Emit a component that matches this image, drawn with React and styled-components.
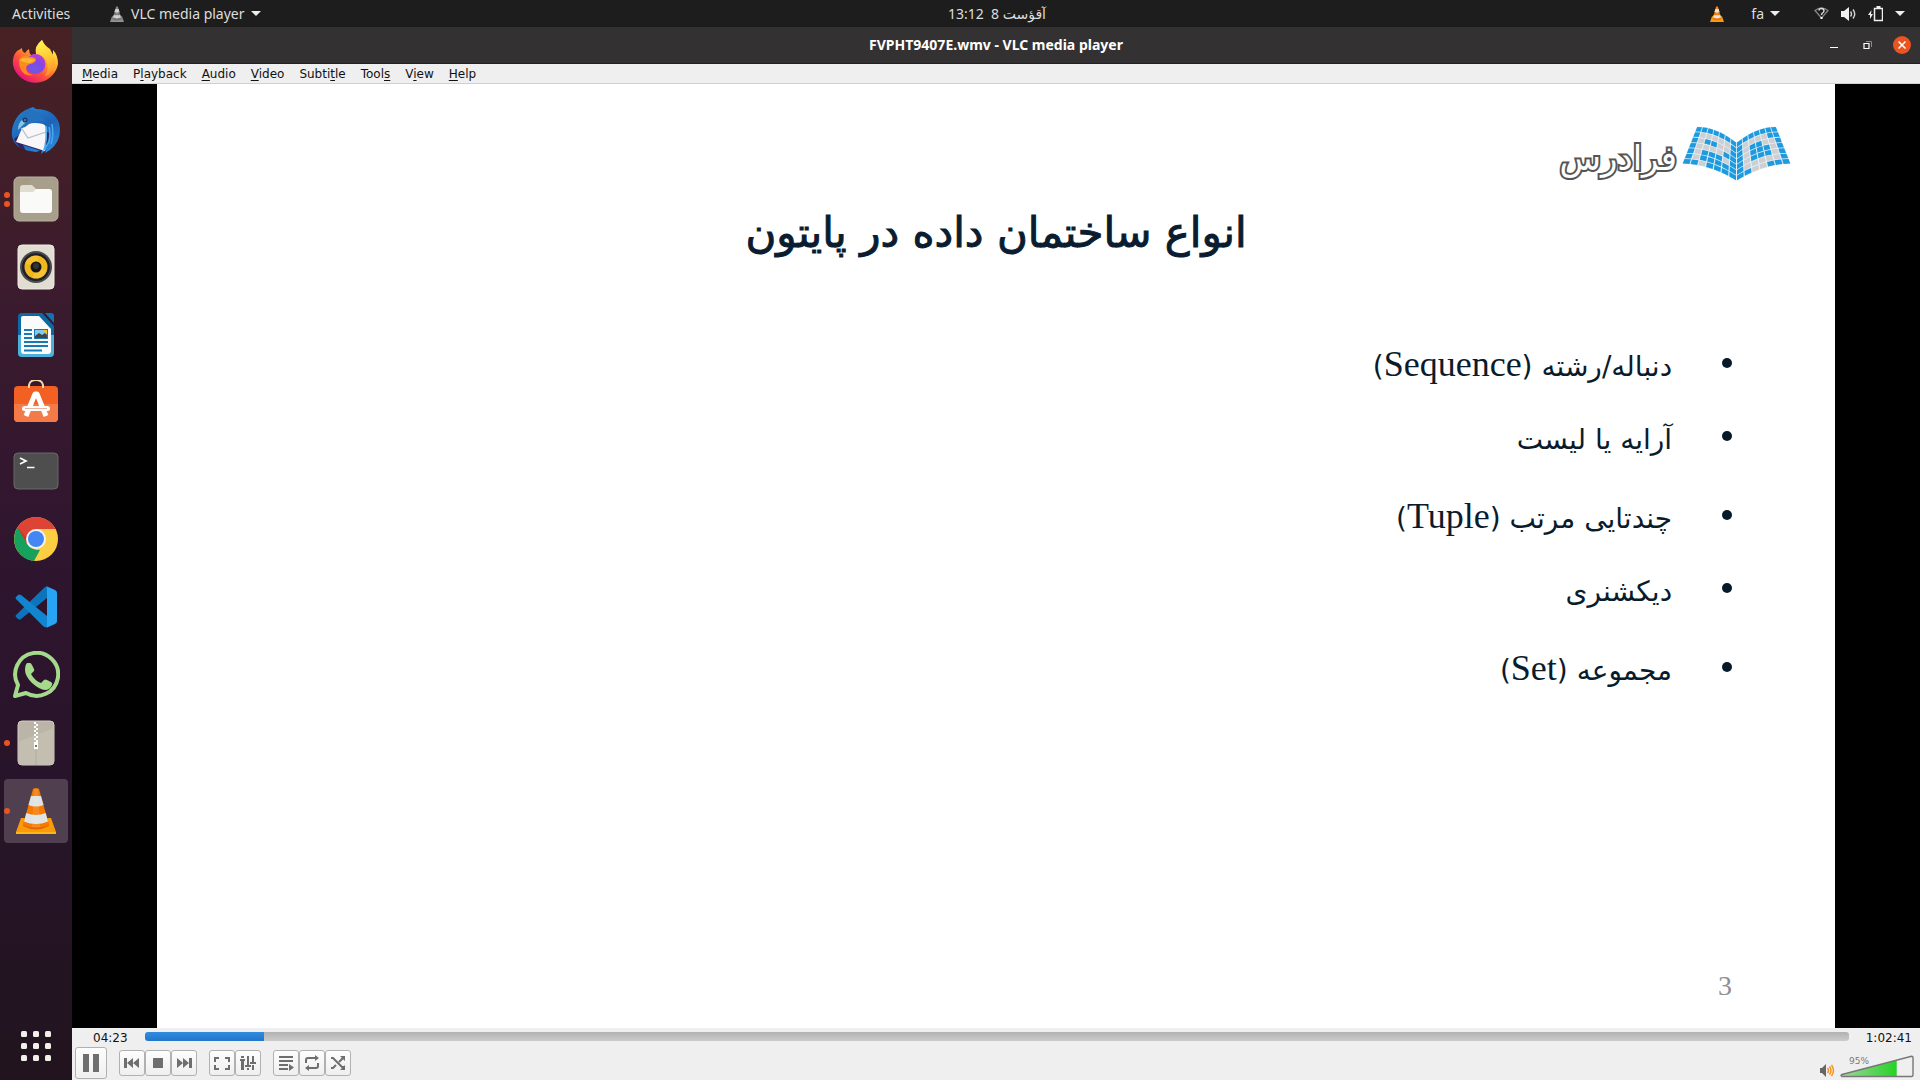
import React, { useState } from "react";
import styled, { createGlobalStyle, css } from "styled-components";

const GlobalStyle = createGlobalStyle`
  *, *::before, *::after { box-sizing: border-box; }
  html, body, #root { margin: 0; height: 100%; }
  body { background: #000; overflow: hidden; }
  button { border: 0; padding: 0; margin: 0; background: none; color: inherit; font: inherit; cursor: default; }
  svg { display: block; }
`;

const shellFont = `"Noto Sans", "DejaVu Sans", sans-serif`;
const qtFont = `"DejaVu Sans", sans-serif`;

/* ---------- desktop shell ---------- */

const Desktop = styled.div`
  display: flex;
  flex-direction: column;
  height: 100vh;
`;

const TopBar = styled.header`
  display: flex;
  height: 27px;
  background: #1d1d1d;
  color: #dedede;
  font: 14px/26px ${shellFont};
`;

const Activities = styled.button`
  flex: none;
  padding-left: 12px;
  width: 74px;
  text-align: left;
  white-space: nowrap;
`;

const TopBarMain = styled.div`
  flex: 1;
  display: grid;
  grid-template-columns: 1fr auto 1fr;
  align-items: center;
`;

const AppMenu = styled.button`
  display: flex;
  align-items: center;
  gap: 6px;
  padding-left: 35px;
  justify-self: start;
`;

const Clock = styled.button`
  white-space: pre;
`;

const Tray = styled.div`
  display: flex;
  align-items: center;
  justify-self: end;
  gap: 26px;
  padding-right: 15px;
`;

const TrayButton = styled.button`
  display: flex;
  align-items: center;
  gap: ${(p) => p.$gap || 6}px;
  margin-right: ${(p) => p.$after || 0}px;
`;

const Caret = styled.span`
  border: 5px solid transparent;
  border-top-color: #eee;
  border-bottom: 0;
`;

const Workspace = styled.div`
  flex: 1;
  min-height: 0;
  display: flex;
`;

const Dock = styled.nav`
  width: 72px;
  flex: none;
  display: flex;
  flex-direction: column;
  align-items: center;
  gap: 4px;
  padding: 4px 0 2px;
  background: linear-gradient(#482123, #3a1b2e 27%, #2f152f 50%, #28142a 72%, #21141e);
`;

const DockItem = styled.button`
  position: relative;
  width: 64px;
  height: 64px;
  flex: none;
  display: grid;
  place-items: center;
  border-radius: 4px;
  ${(p) => p.$active && css`background: #50404f;`}
  ${(p) => p.$last && css`margin-top: auto;`}
`;

const Dots = styled.span`
  position: absolute;
  left: 0;
  top: 0;
  height: 100%;
  display: flex;
  flex-direction: column;
  justify-content: center;
  gap: 3px;
`;

const Dot = styled.i`
  width: 6px;
  height: 6px;
  border-radius: 50%;
  background: #e95420;
`;

/* ---------- player window ---------- */

const Window = styled.main`
  flex: 1;
  min-width: 0;
  display: flex;
  flex-direction: column;
  background: #efefef;
`;

const TitleBar = styled.div`
  flex: none;
  display: grid;
  grid-template-columns: 1fr auto 1fr;
  align-items: center;
  height: 37px;
  background: #333132;
  border-bottom: 1px solid #232122;
`;

const WindowTitle = styled.h1`
  grid-column: 2;
  margin: 0;
  color: #fff;
  font: bold 14px/36px ${shellFont};
`;

const WindowButtons = styled.div`
  justify-self: end;
  display: flex;
  align-items: center;
  gap: 16px;
  padding-right: 9px;
`;

const WindowButton = styled.button`
  width: 18px;
  height: 18px;
  border-radius: 50%;
  background: ${(p) => (p.$close ? "#e95420" : "transparent")};
`;

const MenuBar = styled.nav`
  flex: none;
  display: flex;
  height: 20px;
  padding-left: 2px;
  border-bottom: 1px solid #d0d0d0;
  color: #111;
  font: 12px/18px ${qtFont};
`;

const MenuButton = styled.button`
  padding: 0 7px 0 8px;
  u { text-underline-offset: 2px; }
`;

const Video = styled.section`
  flex: 1;
  min-height: 0;
  display: flex;
  justify-content: center;
  background: #000;
`;

const Slide = styled.article`
  height: 100%;
  aspect-ratio: 16 / 9;
  display: flex;
  flex-direction: column;
  padding: 42px 44px 26px;
  background: #fff;
  color: #0a1c2c;
`;

const Brand = styled.div`
  display: flex;
  gap: 5px;
  align-items: flex-start;
  height: 55px;
`;

const BrandName = styled.span`
  color: #fff;
  font: 34px/64px ${qtFont};
  -webkit-text-stroke: 4px #555;
  paint-order: stroke fill;
`;

const SlideTitle = styled.h2`
  margin: 22px 0 0;
  text-align: center;
  color: #0a1c30;
  font: 42px/60px ${qtFont};
  -webkit-text-stroke: 1px #0a1c30;
`;

const Points = styled.ul`
  list-style: none;
  margin: 45px 0 0;
  padding: 0 59px;
  font: 28px/40px ${qtFont};
`;

const Point = styled.li`
  display: flex;
  align-items: flex-end;
  gap: 50px;
  height: ${(p) => (p.$mixed ? 79 : 73)}px;
  &::before {
    content: "";
    width: 10px;
    height: 10px;
    margin-bottom: 19px;
    border-radius: 50%;
    background: #071a2a;
  }
`;

const Latin = styled.bdi`
  font: 36px/40px "Liberation Serif", serif;
`;

const PageNumber = styled.p`
  margin: auto 59px 0;
  color: #8f8f8f;
  font: 28px/32px "Liberation Serif", serif;
`;

/* ---------- playback controls ---------- */

const Controls = styled.footer`
  flex: none;
  height: 52px;
  color: #111;
  font: 12px/20px ${qtFont};
`;

const SeekRow = styled.div`
  display: flex;
  align-items: flex-start;
  gap: 17px;
  height: 18px;
  padding: 0 8px 0 21px;
`;

const Seek = styled.input`
  appearance: none;
  flex: 1;
  min-width: 0;
  height: 9px;
  margin: 4px 0 0;
  border-radius: 3px;
  background:
    linear-gradient(#2f8ce0, #2277c8) 0 0 / var(--played) 100% no-repeat,
    linear-gradient(#b2b2b2, #cbcbcb);
  &::-webkit-slider-thumb { appearance: none; width: 1px; height: 9px; }
`;

const ButtonRow = styled.div`
  display: flex;
  align-items: center;
  gap: 12px;
  height: 34px;
  padding: 0 6px 0 3px;
`;

const ButtonGroup = styled.div`
  display: flex;
`;

const ControlButton = styled.button`
  width: ${(p) => (p.$large ? 32 : 26)}px;
  height: ${(p) => (p.$large ? 32 : 26)}px;
  display: grid;
  place-items: center;
  border: 1px solid #b1b1b1;
  border-radius: 3px;
  background: linear-gradient(#fdfdfd, #efefef);
  color: #6e6e6e;
`;

const Volume = styled.div`
  display: flex;
  align-items: flex-end;
  align-self: flex-end;
  gap: 5px;
  margin-left: auto;
  padding-bottom: 2px;
`;

const VolumeWedge = styled.label`
  position: relative;
  display: block;
  input { position: absolute; inset: 0; width: 100%; height: 100%; margin: 0; opacity: 0; }
`;

const VolumeText = styled.span`
  position: absolute;
  left: 9px;
  top: 0;
  color: #7a7a7a;
  font: 9px/12px ${qtFont};
`;

/* ---------- icons ---------- */

const Cone = ({ size, grey }) => {
  const o = grey ? "#777" : "#f57900";
  const base = grey ? "#8a8a8a" : "#fb9a0a";
  const w = grey ? "#ccc" : "#dfe3e4";
  return (
    <svg width={size} height={size} viewBox="0 0 48 48">
      <path d="M9 31h30l5 14v2H4v-2z" fill={base} />
      <path d="M4 45h40v2H4z" fill={grey ? "#aaa" : "#ffb515"} />
      <path d="M12 34l-1 5q13 7 26 0l-1-5z" fill={grey ? "#666" : "#d96a00"} />
      <path d="M21 2q3-2 6 0l10 36q-13 6-26 0z" fill={o} />
      <path d="M19 9h10l2.500 9q-7.500 3-15 0z" fill={w} />
      <path d="M14.300 26q9.700 4 19.400 0l2.300 8.500q-12 5-24 0z" fill={w} />
      <path d="M22 2h4l2 38h-8z" fill="#fff" opacity=".13" />
    </svg>
  );
};

const Firefox = () => (
  <svg width="48" height="48" viewBox="0 -1 48 48">
    <defs>
      <linearGradient id="ffBody" x1=".85" y1=".1" x2=".2" y2=".95">
        <stop offset="0" stopColor="#fff44f" /><stop offset=".35" stopColor="#ffa52a" />
        <stop offset=".65" stopColor="#ff4f3c" /><stop offset="1" stopColor="#e3117b" />
      </linearGradient>
      <linearGradient id="ffTail" x1=".4" y1="0" x2=".6" y2="1">
        <stop offset="0" stopColor="#fff44f" /><stop offset=".6" stopColor="#ffc02f" /><stop offset="1" stopColor="#ff8a2a" />
      </linearGradient>
      <radialGradient id="ffGlobe" cx=".45" cy=".75" r=".8">
        <stop offset="0" stopColor="#6a5be8" /><stop offset=".5" stopColor="#8447e0" /><stop offset="1" stopColor="#c63ae0" />
      </radialGradient>
    </defs>
    <path d="M10 8q0 4 3 5 2-3 4-4 0 4 2 6l6-1q-2-7 5-14 2 5 8 9l3 6v-5q5 5 5 14a23 23 0 0 1-45 1q-1-9 4-14 2-1 5-3z" fill="url(#ffBody)" />
    <path d="M24 14Q22 6 30 0q2 6 8 11 6 6 5 14-2 9-10 11 6-12-2-19-3-3-7-3z" fill="url(#ffTail)" />
    <circle cx="23.500" cy="24" r="10" fill="url(#ffGlobe)" />
    <path d="M8 18q5-4 10-1 6 0 6 3-1 3-6 4-4 1-4 5 1 5 7 6-8 2-12-5-3-7-1-12z" fill="#ff8a1f" />
    <path d="M7 20q6-4 16 0-3 3-6 3-4 0-10-3z" fill="#ffb92e" />
  </svg>
);

const Thunderbird = () => (
  <svg width="50" height="50" viewBox="0 0 50 50">
    <defs>
      <linearGradient id="tbBody" x1=".2" y1="0" x2=".8" y2="1">
        <stop offset="0" stopColor="#2a86d4" /><stop offset=".5" stopColor="#1d63b8" /><stop offset="1" stopColor="#2b8ee0" />
      </linearGradient>
    </defs>
    <path d="M17 3l5-2 3 2q18 0 23 14 4 17-9 27l-5 3 1-3-5 4 1-4-6 2Q3 44 1 30 0 21 5 13 9 6 17 3z" fill="url(#tbBody)" />
    <path d="M3 33q4 9 12 12l-3-6 18 6q8-4 8-18L20 20z" fill="#33225c" />
    <path d="M12 20q8-5 20-2 5 2 4 10l-2 17L5 36z" fill="#f7f7f9" />
    <path d="M9 20l8 12 18-6" fill="none" stroke="#b9bcc6" strokeWidth="1.300" />
    <path d="M3 22Q5 9 18 3q12 2 15 12-8-1-15 3-4 4-8 4z" fill="#2471bd" />
    <path d="M7 24q2-2 8-8l-4-2q-4 3-4 10z" fill="#83c6e8" />
    <circle cx="14" cy="14" r="2.500" fill="#173b67" /><circle cx="14" cy="14" r="1.200" fill="#4f7389" />
    <path d="M35 20q1 15-2 24l5-8q2-9 0-15M41 18q2 12-1 20" fill="none" stroke="#4aa9ef" strokeWidth="1.500" />
  </svg>
);

const Files = () => (
  <svg width="46" height="46" viewBox="0 0 46 46">
    <rect x="1" y="1" width="44" height="44" rx="5" fill="#a49b87" stroke="#b9b2a0" />
    <path d="M2 22L20 2h20q4 0 4 4v34q0 4-4 4H6q-4 0-4-4z" fill="#aaa28f" opacity=".6" />
    <path d="M7 12q0-3 3-3h9l4 4h8v8H7z" fill="#e0dccf" />
    <path d="M7 16h13l3-3h13q3 0 3 3v18q0 3-3 3H10q-3 0-3-3z" fill="#fafaf8" />
  </svg>
);

const Rhythmbox = () => (
  <svg width="38" height="46" viewBox="0 0 38 46">
    <rect x="1" y="1" width="36" height="44" rx="4" fill="#e2ddd2" stroke="#efece5" />
    <circle cx="19" cy="23" r="16" fill="#4b4c50" /><circle cx="19" cy="23" r="14" fill="#20202a" />
    <circle cx="19" cy="23" r="11.500" fill="#f0b81c" /><path d="M19 23L8 19a11.500 11.500 0 0 1 14-7zM19 23l11 4a11.500 11.500 0 0 1-14 7z" fill="#ffd04e" opacity=".45" />
    <circle cx="19" cy="23" r="5.500" fill="#161616" /><circle cx="19" cy="22" r="3" fill="#343434" />
  </svg>
);

const Writer = () => (
  <svg width="38" height="46" viewBox="0 0 38 46">
    <path d="M5 1h20l12 13v27q0 4-4 4H5q-4 0-4-4V5q0-4 4-4z" fill="#0d69a5" />
    <path d="M1 23h36v18q0 4-4 4H5q-4 0-4-4z" fill="#4bb0da" />
    <path d="M28 1h6q3 0 3 3v7z" fill="#1373b0" />
    <path d="M6 4h16l12 13v22q0 3-3 3H7q-3 0-3-3V6q0-2 2-2z" fill="#fbfbfb" />
    <path d="M7 18h8M7 22h8M7 26h8M7 30h24M7 34h24M7 38.500h18" stroke="#1879b7" strokeWidth="2" />
    <path d="M17 17h14v10H17z" fill="#1879b7" /><path d="M18 18h12v8H18z" fill="#83c9ed" />
    <path d="M18 26v-2l4-3 3 2 3-2 2 2v3z" fill="#444" /><path d="M26 18h4v4z" fill="#f7c51d" />
  </svg>
);

const Software = () => (
  <svg width="46" height="46" viewBox="0 2 46 46">
    <rect x="1" y="8" width="44" height="36" rx="4" fill="#f26023" />
    <path d="M1 26h44v14q0 4-4 4H5q-4 0-4-4z" fill="#f47b48" />
    <path d="M16 10V7q1-5 7-5t7 5v3" fill="none" stroke="#f5d9a8" strokeWidth="2" />
    <path d="M13 38l9-22h2l9 22" fill="none" stroke="#fff" strokeWidth="5" strokeLinejoin="round" />
    <rect x="9" y="28" width="28" height="5" rx="2.500" fill="#fff" /><path d="M12 30.500h22" stroke="#e7b5a0" />
  </svg>
);

const Terminal = () => (
  <svg width="46" height="38" viewBox="0 0 46 38">
    <rect x="1" y="1" width="44" height="36" rx="4" fill="#4e4e4e" stroke="#686868" />
    <path d="M7 6l6 3-6 3M14 15.500h7.500" fill="none" stroke="#fff" strokeWidth="1.700" />
  </svg>
);

const Chrome = () => (
  <svg width="46" height="46" viewBox="0 0 46 46">
    <circle cx="23" cy="23" r="22" fill="#fdce42" />
    <path d="M4 12a22 22 0 0 1 38 0v1H23L14 28z" fill="#de4436" />
    <path d="M4.500 11.500L14 28q4 6 13 6l-6 11A22 22 0 0 1 4.500 11.500z" fill="#16a15c" />
    <path d="M14 28L4.500 11.500 14 22z" fill="#b5362a" opacity=".6" />
    <circle cx="23" cy="23" r="10" fill="#f3f5f6" /><circle cx="23" cy="23" r="8" fill="#4487f4" />
  </svg>
);

const VsCode = () => (
  <svg width="42" height="42" viewBox="0 0 42 42">
    <path d="M1 29q-1 1 0 2l2 2q1 1 3 0L32 12V1q-1-1-3 1z" fill="#0b74ba" />
    <path d="M1 13q-1-1 0-2l2-2q1-1 3 0l26 21v11q-2 1-4-1z" fill="#1285d0" />
    <path d="M31 0l9 4q2 1 2 3v28q0 2-2 3l-9 4q1 0 1-2V2q0-1-1-2z" fill="#27a5f3" />
  </svg>
);

const WhatsApp = () => (
  <svg width="48" height="48" viewBox="0 1 48 48">
    <path d="M3 46l3-11a21.500 21.500 0 1 1 8 8z" fill="none" stroke="#a5d98b" strokeWidth="4" strokeLinejoin="round" />
    <path d="M15 13h3q1 0 2 2l2 4q1 2-1 3l-2 2q4 7 10 9l3-3q1-1 3 0l4 2q2 1 1 3-2 5-7 5-5 0-13-7-7-7-7-13 0-5 2-7z" fill="#a5d98b" />
  </svg>
);

const Archive = () => (
  <svg width="38" height="46" viewBox="0 0 38 46">
    <rect x="1" y="1" width="36" height="44" rx="4" fill="#bbb5a7" stroke="#d3cec2" />
    <path d="M1 22l36-14v33q0 4-4 4H5q-4 0-4-4z" fill="#c4beb0" />
    <path d="M18 2v20M20 4v18" stroke="#fff" strokeWidth="2" strokeDasharray="2 2" />
    <path d="M17 22h4v7h-4z" fill="#fff" /><path d="M18 25h2v2h-2z" fill="#7c776b" /><path d="M19 30v15" stroke="#b1ab9c" />
  </svg>
);

const AppsGrid = () => (
  <svg width="30" height="30" viewBox="0 0 30 30" fill="#f3f0ea">
    {[0, 12, 24].map((y) => [0, 12, 24].map((x) => <rect key={`${x}-${y}`} x={x} y={y} width="6" height="6" rx="1.500" />))}
  </svg>
);

const Wifi = () => (
  <svg width="15" height="13" viewBox="0 0 15 13">
    <path d="M1 3.500q6.500-5 13 0L7.500 11z" fill="none" stroke="#858585" strokeWidth="1.300" />
    <path d="M5 3.500Q5 1.500 7.500 1.500T10 4q0 1-1.500 2-1 1-1 2" fill="none" stroke="#ddd" strokeWidth="1.400" />
    <rect x="6.500" y="10" width="2" height="2" fill="#fff" />
  </svg>
);

const Speaker = () => (
  <svg width="15" height="14" viewBox="0 0 15 14">
    <path d="M0 4h3l5-4v14l-5-4H0z" fill="#f0f0f0" />
    <path d="M9.500 4.500q2 2.500 0 5M12 2.500q3.500 4.500 0 9" fill="none" stroke="#d5d5d5" strokeWidth="1.400" />
  </svg>
);

const Battery = () => (
  <svg width="15" height="16" viewBox="0 0 15 16">
    <path d="M6.500 2.500h8v12h-8z" fill="none" stroke="#eee" strokeWidth="1.500" />
    <path d="M8.500 0h4v2h-4z" fill="#eee" /><path d="M3.500 4L0 9h2v4l3-5H3z" fill="#eee" />
  </svg>
);

const MinimizeIcon = () => (
  <svg width="18" height="18"><path d="M5 11h8v1H5z" fill="#fff" /></svg>
);
const RestoreIcon = () => (
  <svg width="18" height="18" fill="none"><path d="M7 5.500h5.500V11" stroke="#8b8b8b" /><path d="M5 7.500h5v5H5z" stroke="#fff" strokeWidth="1.200" /></svg>
);
const CloseIcon = () => (
  <svg width="18" height="18"><path d="M5.500 5.500l7 7M12.500 5.500l-7 7" stroke="#fff" strokeWidth="1.500" /></svg>
);

const controlPaths = {
  prev: <><path d="M0 3h3v10H0z" /><path d="M3 8l6-5v10zM9 8l6-5v10z" /></>,
  stop: <path d="M3 3h10v10H3z" />,
  next: <><path d="M13 3h3v10h-3z" /><path d="M1 3l6 5-6 5zM7 3l6 5-6 5z" /></>,
  fullscreen: <path d="M0 2h5v2H2v3H0zM11 2h5v5h-2V4h-3zM0 10h2v3h3v2H0zM14 10h2v5h-5v-2h3z" />,
  equalizer: <path d="M1 4h3v11H1zM0 4h5v2H0zM1 1h3v2H1zM7 1h2v9H7zM5 10h6v2H5zM7 13h2v2H7zM12 1h2v6h-2zM10 7h6v2h-6zM12 10h2v5h-2z" />,
  playlist: <path d="M1 1h14v2H1zM1 5h14v2H1zM1 9h9v2H1zM1 13h9v2H1zM11 9l5 3.500-5 3.500z" />,
  loop: (
    <>
      <path d="M2 8V5q0-2 2-2h9M14 8v3q0 2-2 2H3" fill="none" stroke="currentColor" strokeWidth="2" />
      <path d="M11 0l4 3-4 3zM5 10l-4 3 4 3z" />
    </>
  ),
  shuffle: (
    <>
      <path d="M1 3h2l9 9h2M1 13h2l3-3M9 7l4-4" fill="none" stroke="currentColor" strokeWidth="2" />
      <path d="M10 1h5v5zM15 10v5h-5z" />
    </>
  ),
};

const ControlIcon = ({ name }) => (
  <svg width="16" height="16" viewBox="0 0 16 16" fill="currentColor">{controlPaths[name]}</svg>
);

const PauseIcon = () => (
  <svg width="16" height="18" fill="#6e6e6e"><path d="M0 0h6v18H0zM10 0h6v18h-6z" /></svg>
);

const VolumeIcon = () => (
  <svg width="15" height="14" viewBox="0 0 15 14">
    <path d="M0 4h2l4-4v13L2 9H0z" fill="#666" />
    <path d="M7.500 4q2 2.500 0 5M9.500 2.500q3 4 0 8M11.500 1q4 5.500 0 11" fill="none" stroke="#f7941d" strokeWidth="1.500" />
  </svg>
);

/* Book emblem: each page is a curved 7x7 mesh of tiles, 1 = blue, 0 = grey. */
const leftPage = ["1111111", "1000001", "1011001", "1000011", "1011101", "1011111", "1101111"];
const rightPage = ["1111111", "1100001", "1001101", "1011101", "1011101", "1000001", "1110011"];

const meshPoint = (u, v, mirrored) => {
  const topX = 15 + u * 39.5;
  const topY = 0.5 + 16 * u * u;
  const botX = u * 54.5;
  const botY = 38 + 17 * u * u;
  const x = topX + (botX - topX) * v;
  const y = topY + (botY - topY) * v;
  return [mirrored ? 109 - x : x, y];
};

const meshPolygon = (corners, mirrored) =>
  corners.map(([a, b]) => meshPoint(a / 7, b / 7, mirrored).map((n) => n.toFixed(1)).join(",")).join(" ");

const pageTiles = (rows, mirrored) =>
  rows.flatMap((row, r) =>
    [...row].map((cell, c) => {
      const g = 0.07;
      const corners = [[c + g, r + g], [c + 1 - g, r + g], [c + 1 - g, r + 1 - g], [c + g, r + 1 - g]];
      return <polygon key={`${r}-${c}`} points={meshPolygon(corners, mirrored)} fill={cell === "1" ? "#1f9ade" : "#cfcfd2"} />;
    })
  );

const pageSheet = [...Array.from({ length: 8 }, (_, i) => [i, 0]), ...Array.from({ length: 8 }, (_, i) => [7 - i, 7])];

const BookEmblem = () => (
  <svg width="109" height="55" viewBox="0 0 109 55">
    <g><polygon points={meshPolygon(pageSheet, false)} fill="#e3f2fa" />{pageTiles(leftPage, false)}</g>
    <g><polygon points={meshPolygon(pageSheet, true)} fill="#e3f2fa" />{pageTiles(rightPage, true)}</g>
  </svg>
);

/* ---------- data ---------- */

const dockApps = [
  { name: "Firefox", icon: <Firefox /> },
  { name: "Thunderbird", icon: <Thunderbird /> },
  { name: "Files", icon: <Files />, windows: 2 },
  { name: "Rhythmbox", icon: <Rhythmbox /> },
  { name: "LibreOffice Writer", icon: <Writer /> },
  { name: "Ubuntu Software", icon: <Software /> },
  { name: "Terminal", icon: <Terminal /> },
  { name: "Chrome", icon: <Chrome /> },
  { name: "Visual Studio Code", icon: <VsCode /> },
  { name: "WhatsApp", icon: <WhatsApp /> },
  { name: "Archive Manager", icon: <Archive />, windows: 1 },
  { name: "VLC media player", icon: <Cone size={48} />, windows: 1, active: true },
];

const menus = [["", "M", "edia"], ["P", "l", "ayback"], ["", "A", "udio"], ["", "V", "ideo"], ["Subti", "t", "le"], ["Tool", "s", ""], ["V", "i", "ew"], ["", "H", "elp"]];

const points = [
  { text: "دنباله/رشته", latin: "Sequence" },
  { text: "آرایه یا لیست" },
  { text: "چندتایی مرتب", latin: "Tuple" },
  { text: "دیکشنری" },
  { text: "مجموعه", latin: "Set" },
];

const controlGroups = [["prev", "stop", "next"], ["fullscreen", "equalizer"], ["playlist", "loop", "shuffle"]];

const DURATION = 3761;

const formatTime = (s) => {
  const two = (n) => String(n).padStart(2, "0");
  const h = Math.floor(s / 3600);
  const rest = `${two(Math.floor((s % 3600) / 60))}:${two(s % 60)}`;
  return h ? `${h}:${rest}` : rest;
};

export default function App() {
  const [position, setPosition] = useState(263);
  const [volume, setVolume] = useState(95);
  const fillX = (volume / 125) * 72 + 2;

  return (
    <Desktop>
      <GlobalStyle />
      <TopBar>
        <Activities>Activities</Activities>
        <TopBarMain>
          <AppMenu><Cone size={16} grey />VLC media player<Caret /></AppMenu>
          <Clock>{"13:12  8 آقؤست"}</Clock>
          <Tray>
            <TrayButton aria-label="VLC"><Cone size={16} /></TrayButton>
            <TrayButton $after={8}>fa<Caret /></TrayButton>
            <TrayButton $gap={12} aria-label="System menu"><Wifi /><Speaker /><Battery /><Caret /></TrayButton>
          </Tray>
        </TopBarMain>
      </TopBar>
      <Workspace>
        <Dock aria-label="Dock">
          {dockApps.map((app) => (
            <DockItem key={app.name} aria-label={app.name} $active={app.active}>
              {app.windows && <Dots>{Array.from({ length: app.windows }, (_, i) => <Dot key={i} />)}</Dots>}
              {app.icon}
            </DockItem>
          ))}
          <DockItem aria-label="Show applications" $last><AppsGrid /></DockItem>
        </Dock>
        <Window>
          <TitleBar>
            <WindowTitle>FVPHT9407E.wmv - VLC media player</WindowTitle>
            <WindowButtons>
              <WindowButton aria-label="Minimize"><MinimizeIcon /></WindowButton>
              <WindowButton aria-label="Restore"><RestoreIcon /></WindowButton>
              <WindowButton aria-label="Close" $close><CloseIcon /></WindowButton>
            </WindowButtons>
          </TitleBar>
          <MenuBar>
            {menus.map(([a, key, b]) => (
              <MenuButton key={a + key + b}>{a}<u>{key}</u>{b}</MenuButton>
            ))}
          </MenuBar>
          <Video>
            <Slide dir="rtl" lang="fa">
              <Brand><BookEmblem /><BrandName>فرادرس</BrandName></Brand>
              <SlideTitle>انواع ساختمان داده در پایتون</SlideTitle>
              <Points>
                {points.map((p) => (
                  <Point key={p.text} $mixed={Boolean(p.latin)}>
                    <span>{p.text}{p.latin && <> (<Latin>{p.latin}</Latin>)</>}</span>
                  </Point>
                ))}
              </Points>
              <PageNumber>3</PageNumber>
            </Slide>
          </Video>
          <Controls>
            <SeekRow>
              <span>{formatTime(position)}</span>
              <Seek
                type="range" aria-label="Position" min="0" max={DURATION} value={position}
                onChange={(e) => setPosition(Number(e.target.value))}
                style={{ "--played": `${(position / DURATION) * 100}%` }}
              />
              <span>{formatTime(DURATION)}</span>
            </SeekRow>
            <ButtonRow>
              <ControlButton $large aria-label="Pause"><PauseIcon /></ControlButton>
              {controlGroups.map((group) => (
                <ButtonGroup key={group[0]}>
                  {group.map((name) => <ControlButton key={name} aria-label={name}><ControlIcon name={name} /></ControlButton>)}
                </ButtonGroup>
              ))}
              <Volume>
                <VolumeIcon />
                <VolumeWedge>
                  <VolumeText>{volume}%</VolumeText>
                  <svg width="74" height="23" viewBox="0 0 74 23">
                    <defs>
                      <linearGradient id="volFill"><stop offset="0" stopColor="#a3d5a0" /><stop offset="1" stopColor="#00d200" /></linearGradient>
                      <clipPath id="volClip"><rect width={fillX} height="23" /></clipPath>
                    </defs>
                    <path d="M1 19.500L73 1v20.500H1z" fill="url(#volFill)" clipPath="url(#volClip)" />
                    <path d="M2 19.500L71.500 1.200q1.500 0 1.500 1.300V20q0 1.500-1.500 1.500H2q-2-1 0-2z" fill="none" stroke="#777" strokeWidth="1.400" />
                  </svg>
                  <input type="range" aria-label="Volume" min="0" max="125" value={volume} onChange={(e) => setVolume(Number(e.target.value))} />
                </VolumeWedge>
              </Volume>
            </ButtonRow>
          </Controls>
        </Window>
      </Workspace>
    </Desktop>
  );
}
